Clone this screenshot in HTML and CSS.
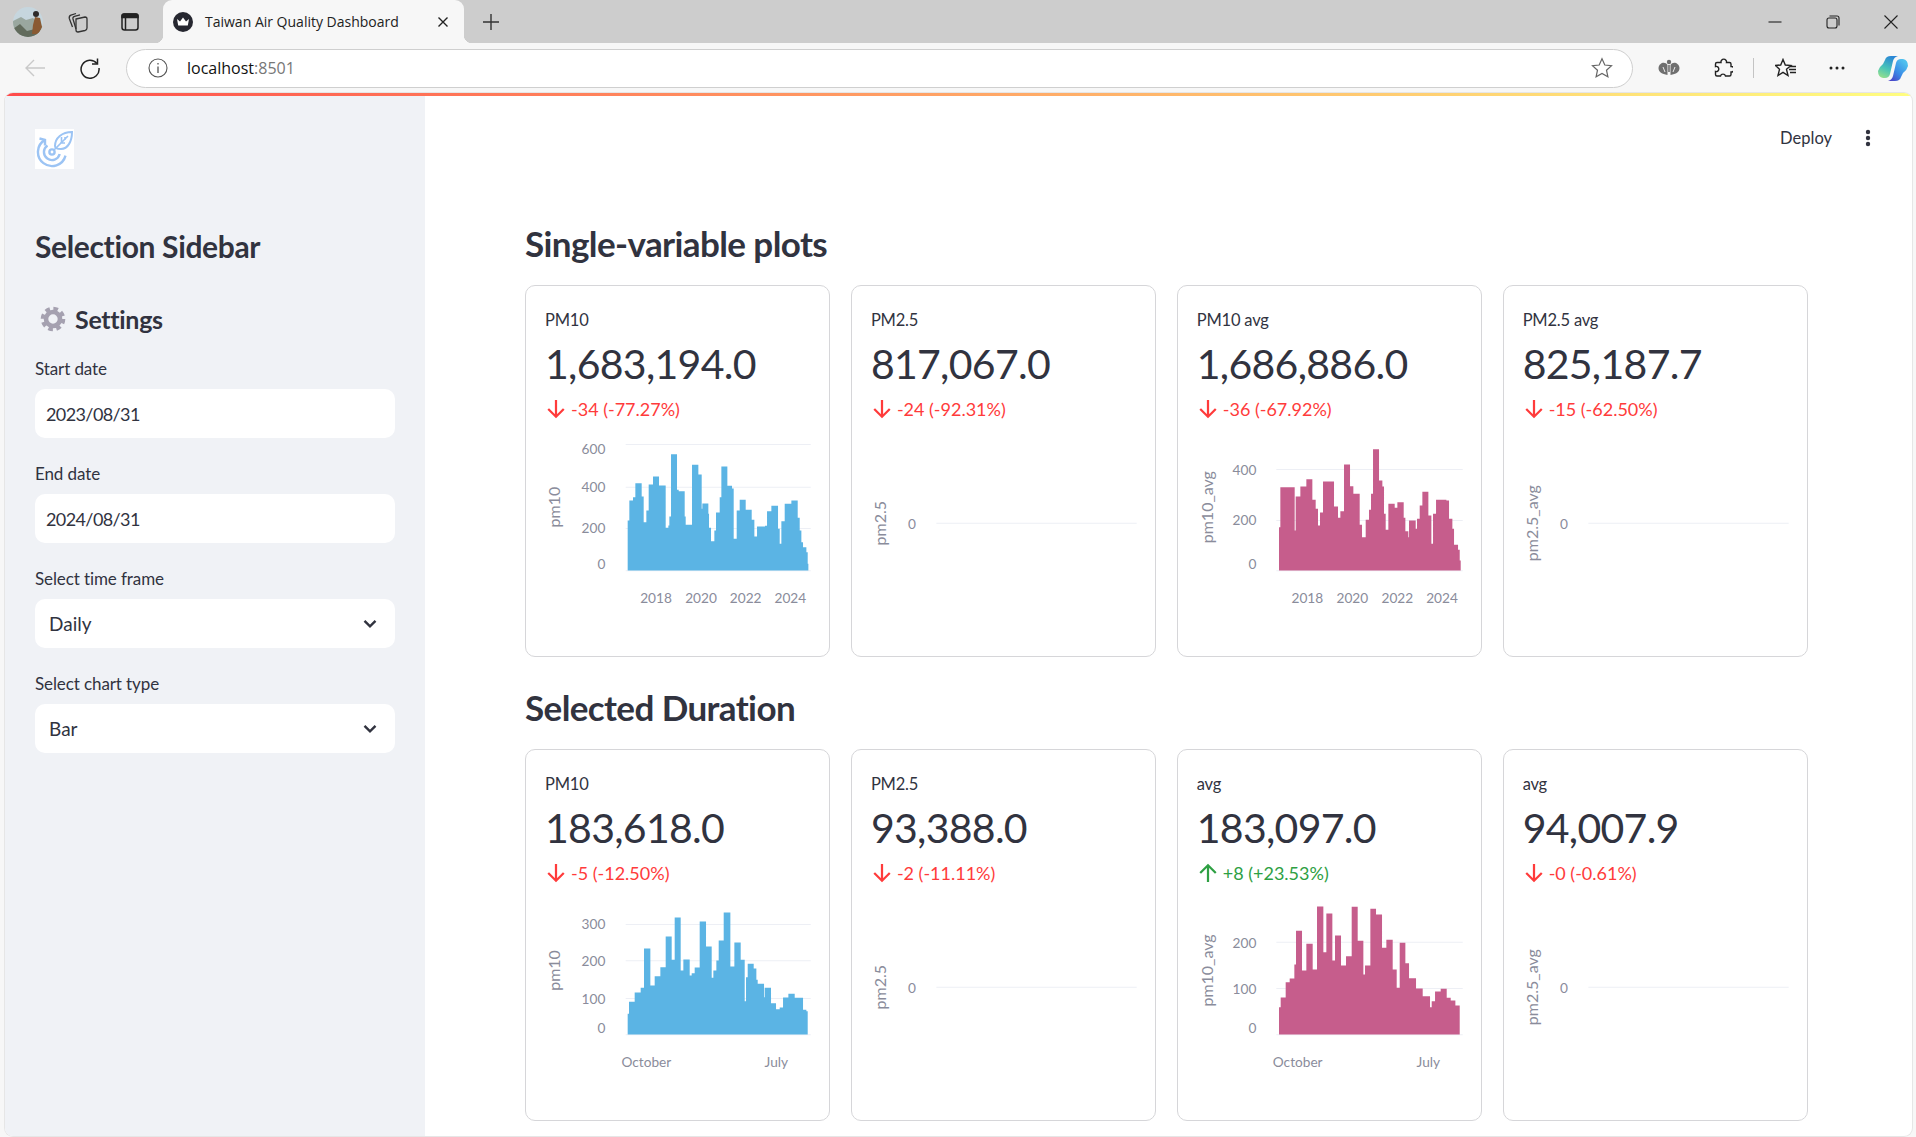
FILE: index.html
```html
<!DOCTYPE html>
<html>
<head>
  <meta charset="UTF-8">
  <title>Taiwan Air Quality Dashboard</title>
  <link rel="stylesheet" href="styles.css">
</head>
<body>
  <div class="tabbar">
    <div class="avatar">
      <svg width="30" height="30" viewBox="0 0 30 30">
        <defs><clipPath id="avatarClip"><circle cx="15" cy="15" r="15"/></clipPath></defs>
        <g clip-path="url(#avatarClip)">
          <rect width="30" height="30" fill="#c6d6de"/>
          <path d="M0 14 L8 10 L13 13 L20 11 L30 20 V30 H0Z" fill="#9aa79f"/>
          <path d="M0 22 L7 17 L14 24 L22 22 L30 26 V30 H0Z" fill="#626b5c"/>
          <path d="M22 10 L27 11 L29 20 L26 27 L19 27 L20 18Z" fill="#8a5a32"/>
          <circle cx="23" cy="7" r="3" fill="#2e2a29"/>
        </g>
      </svg>
    </div>
    <svg class="tab-icon" width="22" height="22" viewBox="0 0 22 22" fill="none" stroke="#333" stroke-width="1.3">
      <path d="M9 8 L18 6 Q20 6 20 8 V17 Q20 19 18 19.5 L11 21 Q9 21 9 19Z"/>
      <path d="M9 18 L6 8 Q5.5 6 7.5 5.3 L13 3.8"/>
      <path d="M5.5 16 L2.3 7.5 Q1.8 5 4 4.2 L9 2.5"/>
    </svg>
    <svg class="tab-icon" width="20" height="20" viewBox="0 0 20 20" fill="none" stroke="#222" stroke-width="1.5">
      <rect x="2" y="2" width="16" height="16" rx="2.5"/>
      <path d="M2 5.5 H18 V4 Q18 2 16 2 H4 Q2 2 2 4Z" fill="#222"/>
      <path d="M5.5 5.5 V18"/>
    </svg>
    <div class="tab">
      <svg class="favicon" width="20" height="20" viewBox="0 0 20 20">
        <circle cx="10" cy="10" r="10" fill="#262730"/>
        <path d="M4 7 L7 9.5 L10 5.5 L13 9.5 L16 7 L14.8 13.5 H5.2Z" fill="#fff"/>
      </svg>
      <span class="tab-title">Taiwan Air Quality Dashboard</span>
      <svg class="tab-close" width="12" height="12" viewBox="0 0 12 12" stroke="#222" stroke-width="1.4"><path d="M1.5 1.5 L10.5 10.5 M10.5 1.5 L1.5 10.5"/></svg>
    </div>
    <svg class="new-tab" width="18" height="18" viewBox="0 0 18 18" stroke="#333" stroke-width="1.4"><path d="M9 1 V17 M1 9 H17"/></svg>
    <div class="window-controls">
      <svg width="14" height="14" viewBox="0 0 14 14" stroke="#222" stroke-width="1.1"><path d="M0.5 7 H13.5"/></svg>
      <svg width="14" height="14" viewBox="0 0 14 14" fill="none" stroke="#222" stroke-width="1.1"><rect x="1" y="3" width="10" height="10" rx="2"/><path d="M3.5 1 H11 Q13 1 13 3 V10.5"/></svg>
      <svg width="14" height="14" viewBox="0 0 14 14" stroke="#222" stroke-width="1.1"><path d="M0.5 0.5 L13.5 13.5 M13.5 0.5 L0.5 13.5"/></svg>
    </div>
  </div>

  <div class="toolbar">
    <svg class="nav-back" width="22" height="22" viewBox="0 0 22 22" fill="none" stroke="#c9c9c9" stroke-width="1.4"><path d="M21 11 H2 M10 3 L2 11 L10 19"/></svg>
    <svg class="nav-reload" width="22" height="22" viewBox="0 0 22 22" fill="none" stroke="#222" stroke-width="1.5"><path d="M18 6.5 A9 9 0 1 0 20 11"/><path d="M18.5 1.5 V7 H13"/></svg>
    <div class="address">
      <svg width="20" height="20" viewBox="0 0 20 20" fill="none" stroke="#555" stroke-width="1.1"><circle cx="10" cy="10" r="9"/><path d="M10 8.5 V15 M10 5 V6.5" stroke-width="1.3"/></svg>
      <span class="url">localhost<span class="url-port">:8501</span></span>
      <svg class="address-star" width="22" height="22" viewBox="0 0 22 22" fill="none" stroke="#666" stroke-width="1.2"><path d="M11 1.8 L13.8 8 L20.5 8.7 L15.5 13.2 L16.9 19.8 L11 16.4 L5.1 19.8 L6.5 13.2 L1.5 8.7 L8.2 8Z"/></svg>
    </div>
    <div class="toolbar-icons">
      <svg width="22" height="18" viewBox="0 0 22 18" fill="#6f6f6f">
        <path d="M9.5 6 C7 2 1 4 0.5 9 C0.5 13 4 15 9.5 16Z"/>
        <path d="M12.5 6 C15 2 21 4 21.5 9 C21.5 13 18 15 12.5 16Z"/>
        <circle cx="11" cy="3" r="2.2"/>
        <path d="M11 6 V13" stroke="#6f6f6f" stroke-width="1.6"/>
        <path d="M5 8 L7 13 M17 8 L15 13" stroke="#f7f7f7" stroke-width="0.9"/>
      </svg>
      <svg width="20" height="20" viewBox="0 0 20 20" fill="none" stroke="#222" stroke-width="1.4"><path d="M8 4.5 A2.8 2.8 0 1 1 13.5 4.5 H16.5 Q18 4.5 18 6 V8.5 A2.8 2.8 0 1 1 18 14 V16.5 Q18 18 16.5 18 H12.5 A2.6 2.6 0 0 0 7.5 18 H4 Q2.5 18 2.5 16.5 V13.5 A2.6 2.6 0 1 0 2.5 8.5 V6 Q2.5 4.5 4 4.5Z"/></svg>
      <span class="toolbar-divider"></span>
      <svg width="22" height="20" viewBox="0 0 22 20" fill="none" stroke="#222" stroke-width="1.4"><path d="M8 1.5 L10.3 7 L16 7.5 L11.5 11.3 L13 17.5 L8 14.3 L3 17.5 L4.5 11.3 L0.5 7.5 L5.7 7Z"/><path d="M15 8.5 H21 M14 11.5 H21 M15 14.5 H21"/></svg>
      <svg width="16" height="4" viewBox="0 0 16 4" fill="#222"><circle cx="2" cy="2" r="1.5"/><circle cx="8" cy="2" r="1.5"/><circle cx="14" cy="2" r="1.5"/></svg>
      <svg width="30" height="27" viewBox="0 0 30 27">
        <defs>
          <linearGradient id="copilotA" x1="0.6" y1="0" x2="0.2" y2="1"><stop offset="0" stop-color="#2a86d6"/><stop offset="0.55" stop-color="#49c4b8"/><stop offset="1" stop-color="#96e08c"/></linearGradient>
          <linearGradient id="copilotB" x1="0.9" y1="0.2" x2="0.2" y2="1"><stop offset="0" stop-color="#4fc0ee"/><stop offset="0.55" stop-color="#3a8ae6"/><stop offset="1" stop-color="#4a45c8"/></linearGradient>
        </defs>
        <path d="M13 1 H20 Q16 2 15 6 L12 19 Q11 23 7 23 H5 Q0 22 0 16 Q1 12 5 9 L7 5 Q8 1 13 1Z" fill="url(#copilotA)"/>
        <path d="M17 26 H10 Q14 25 15 21 L18 8 Q19 4 23 4 H25 Q30 5 30 11 Q29 15 25 18 L23 22 Q22 26 17 26Z" fill="url(#copilotB)"/>
      </svg>
    </div>
  </div>

  <div class="app">
    <div class="decoration"></div>
    <div class="app-body">
      <aside class="sidebar">
        <div class="logo">
          <svg width="39" height="40" viewBox="0 0 39 40" fill="none" stroke="#9cc4f4" stroke-width="2.4">
            <path d="M10 10.9 A14 14 0 1 0 30.5 26.6"/>
            <path d="M4.5 9.5 L10 10.9 L10 16.5"/>
            <path d="M12.5 16.4 A8 8 0 1 0 24.7 25"/>
            <circle cx="17" cy="23" r="2.6"/>
            <path d="M20 17 C20 9 27 3 37 3 C37 12 33 20 26 20 C23 20 20 20 20 17Z" stroke-width="2"/>
            <path d="M19 21 L33 7 M26.5 8 V14 M30 8 V11 M25 14 H30" stroke-width="1.6"/>
          </svg>
        </div>
        <h2 class="sidebar-title">Selection Sidebar</h2>
        <h3 class="settings-title">
          <svg width="26" height="26" viewBox="0 0 26 26" fill="none" stroke="#a5a1b0">
            <circle cx="13" cy="13" r="10.3" stroke-width="4" stroke-dasharray="4.6 3.5"/>
            <circle cx="13" cy="13" r="7" stroke-width="4.6"/>
          </svg>
          Settings
        </h3>
        <div class="field">
          <div class="field-label">Start date</div>
          <div class="field-box">2023/08/31</div>
        </div>
        <div class="field">
          <div class="field-label">End date</div>
          <div class="field-box">2024/08/31</div>
        </div>
        <div class="field">
          <div class="field-label">Select time frame</div>
          <div class="field-box select">Daily
            <svg width="14" height="10" viewBox="0 0 14 10" fill="none" stroke="#31333f" stroke-width="2.4"><path d="M1.5 1.8 L7 7.3 L12.5 1.8"/></svg>
          </div>
        </div>
        <div class="field">
          <div class="field-label">Select chart type</div>
          <div class="field-box select">Bar
            <svg width="14" height="10" viewBox="0 0 14 10" fill="none" stroke="#31333f" stroke-width="2.4"><path d="M1.5 1.8 L7 7.3 L12.5 1.8"/></svg>
          </div>
        </div>
      </aside>

      <main class="main">
        <div class="topbar">
          <span class="deploy">Deploy</span>
          <svg class="kebab" width="6" height="18" viewBox="0 0 6 18" fill="#31333f"><circle cx="3" cy="3" r="2.2"/><circle cx="3" cy="9" r="2.2"/><circle cx="3" cy="15" r="2.2"/></svg>
        </div>

        <h2 class="section-title">Single-variable plots</h2>
        <div class="cards">
          <div class="card">
            <div class="metric-label">PM10</div>
            <div class="metric-value">1,683,194.0</div>
            <div class="metric-delta down">
              <svg class="arrow" width="20" height="20" viewBox="0 0 18 18"><path d="M9 1 V16 M2 9 L9 16 L16 9"/></svg>-34 (-77.27%)
            </div>
            <svg class="chart" viewBox="19 470 910 530">
              <path class="grid" d="M318 492 H873 M318 620 H873 M318 744 H873 M318 871 H873"/>
              <path class="bars-blue" d="M324 870 V720 H329 V660 H340 V650 H347 V608 H366 V648 H372 V725 H380 V690 H387 V612 H400 V588 H418 V615 H438 V742 H446 V735 H449 V708 H454 V521 H472 V628 H477 V632 H495 V708 H498 V733 H517 V553 H536 V582 H546 V685 H548 V669 H566 V700 H568 V742 H574 V782 H584 V750 H589 V696 H600 V650 H605 V558 H623 V616 H637 V624 H642 V775 H651 V690 H660 V658 H678 V688 H696 V718 H704 V768 H712 V738 H736 V736 H742 V692 H755 V676 H775 V745 H780 V790 H785 V722 H795 V670 H815 V660 H834 V712 H840 V750 H845 V785 H850 V800 H860 V815 H864 V850 H866 V870Z"/>
              <text class="tick" x="257" y="522" text-anchor="end">600</text>
              <text class="tick" x="257" y="634" text-anchor="end">400</text>
              <text class="tick" x="257" y="758" text-anchor="end">200</text>
              <text class="tick" x="257" y="865" text-anchor="end">0</text>
              <text class="axis-title" transform="translate(122 680) rotate(-90)" text-anchor="middle">pm10</text>
              <text class="tick" x="409" y="967" text-anchor="middle">2018</text>
              <text class="tick" x="544" y="967" text-anchor="middle">2020</text>
              <text class="tick" x="678" y="967" text-anchor="middle">2022</text>
              <text class="tick" x="812" y="967" text-anchor="middle">2024</text>
            </svg>
          </div>
          <div class="card">
            <div class="metric-label">PM2.5</div>
            <div class="metric-value">817,067.0</div>
            <div class="metric-delta down">
              <svg class="arrow" width="20" height="20" viewBox="0 0 18 18"><path d="M9 1 V16 M2 9 L9 16 L16 9"/></svg>-24 (-92.31%)
            </div>
            <svg class="chart" viewBox="7 470 910 530">
              <path class="grid" d="M260 728 H861"/>
              <text class="tick" x="199" y="745" text-anchor="end">0</text>
              <text class="axis-title" transform="translate(110 728) rotate(-90)" text-anchor="middle">pm2.5</text>
            </svg>
          </div>
          <div class="card">
            <div class="metric-label">PM10 avg</div>
            <div class="metric-value">1,686,886.0</div>
            <div class="metric-delta down">
              <svg class="arrow" width="20" height="20" viewBox="0 0 18 18"><path d="M9 1 V16 M2 9 L9 16 L16 9"/></svg>-36 (-67.92%)
            </div>
            <svg class="chart" viewBox="25 470 910 530">
              <path class="grid" d="M320 567 H879 M320 720 H879 M320 871 H879"/>
              <path class="bars-maroon" d="M328 870 V740 H332 V620 H375 V750 H378 V648 H392 V618 H410 V596 H428 V658 H438 V685 H445 V735 H451 V696 H460 V603 H493 V678 H505 V712 H512 V692 H523 V552 H541 V617 H551 V640 H570 V733 H577 V770 H588 V718 H598 V688 H604 V640 H610 V506 H628 V600 H638 V618 H643 V700 H648 V748 H656 V670 H675 V682 H683 V665 H702 V712 H707 V752 H716 V770 H718 V720 H738 V745 H742 V715 H750 V675 H758 V634 H776 V705 H785 V790 H790 V700 H799 V658 H830 V660 H838 V715 H848 V745 H853 V793 H865 V808 H870 V840 H873 V870Z"/>
              <text class="tick" x="260" y="583" text-anchor="end">400</text>
              <text class="tick" x="260" y="735" text-anchor="end">200</text>
              <text class="tick" x="260" y="865" text-anchor="end">0</text>
              <text class="axis-title" transform="translate(130 680) rotate(-90)" text-anchor="middle">pm10_avg</text>
              <text class="tick" x="413" y="967" text-anchor="middle">2018</text>
              <text class="tick" x="548" y="967" text-anchor="middle">2020</text>
              <text class="tick" x="683" y="967" text-anchor="middle">2022</text>
              <text class="tick" x="817" y="967" text-anchor="middle">2024</text>
            </svg>
          </div>
          <div class="card">
            <div class="metric-label">PM2.5 avg</div>
            <div class="metric-value">825,187.7</div>
            <div class="metric-delta down">
              <svg class="arrow" width="20" height="20" viewBox="0 0 18 18"><path d="M9 1 V16 M2 9 L9 16 L16 9"/></svg>-15 (-62.50%)
            </div>
            <svg class="chart" viewBox="7 470 910 530">
              <path class="grid" d="M260 728 H861"/>
              <text class="tick" x="199" y="745" text-anchor="end">0</text>
              <text class="axis-title" transform="translate(110 728) rotate(-90)" text-anchor="middle">pm2.5_avg</text>
            </svg>
          </div>
        </div>

        <h2 class="section-title second">Selected Duration</h2>
        <div class="cards">
          <div class="card">
            <div class="metric-label">PM10</div>
            <div class="metric-value">183,618.0</div>
            <div class="metric-delta down">
              <svg class="arrow" width="20" height="20" viewBox="0 0 18 18"><path d="M9 1 V16 M2 9 L9 16 L16 9"/></svg>-5 (-12.50%)
            </div>
            <svg class="chart" viewBox="19 452 910 530">
              <path class="grid" d="M318 522 H873 M318 631 H873 M318 744 H873 M318 853 H873"/>
              <path class="bars-blue" d="M324 852 V790 H328 V754 H345 V726 H363 V712 H373 V594 H392 V705 H405 V677 H422 V650 H438 V558 H456 V628 H465 V501 H483 V660 H491 V627 H510 V675 H516 V668 H525 V651 H540 V513 H559 V588 H576 V682 H581 V660 H590 V630 H597 V570 H612 V486 H632 V648 H644 V576 H663 V628 H675 V752 H679 V680 H684 V640 H702 V654 H710 V688 H714 V700 H733 V740 H735 V712 H754 V758 H769 V776 H780 V771 H790 V741 H806 V730 H825 V742 H850 V778 H860 V782 H864 V852Z"/>
              <text class="tick" x="257" y="537" text-anchor="end">300</text>
              <text class="tick" x="257" y="648" text-anchor="end">200</text>
              <text class="tick" x="257" y="760" text-anchor="end">100</text>
              <text class="tick" x="257" y="847" text-anchor="end">0</text>
              <text class="axis-title" transform="translate(122 660) rotate(-90)" text-anchor="middle">pm10</text>
              <text class="tick" x="380" y="949" text-anchor="middle">October</text>
              <text class="tick" x="770" y="949" text-anchor="middle">July</text>
            </svg>
          </div>
          <div class="card">
            <div class="metric-label">PM2.5</div>
            <div class="metric-value">93,388.0</div>
            <div class="metric-delta down">
              <svg class="arrow" width="20" height="20" viewBox="0 0 18 18"><path d="M9 1 V16 M2 9 L9 16 L16 9"/></svg>-2 (-11.11%)
            </div>
            <svg class="chart" viewBox="7 470 910 530">
              <path class="grid" d="M260 728 H861"/>
              <text class="tick" x="199" y="745" text-anchor="end">0</text>
              <text class="axis-title" transform="translate(110 728) rotate(-90)" text-anchor="middle">pm2.5</text>
            </svg>
          </div>
          <div class="card">
            <div class="metric-label">avg</div>
            <div class="metric-value">183,097.0</div>
            <div class="metric-delta up">
              <svg class="arrow" width="20" height="20" viewBox="0 0 18 18"><path d="M9 17 V2 M2 9 L9 2 L16 9"/></svg>+8 (+23.53%)
            </div>
            <svg class="chart" viewBox="25 452 910 530">
              <path class="grid" d="M320 575 H879 M320 714 H879 M320 853 H879"/>
              <path class="bars-maroon" d="M328 852 V770 H333 V741 H348 V695 H360 V684 H374 V642 H379 V541 H397 V660 H410 V580 H429 V657 H442 V468 H461 V605 H470 V489 H488 V630 H496 V555 H514 V645 H529 V617 H546 V469 H564 V571 H581 V672 H586 V645 H602 V475 H619 V492 H637 V592 H650 V568 H669 V657 H681 V712 H690 V577 H707 V638 H718 V683 H739 V714 H759 V737 H781 V770 H786 V752 H796 V723 H813 V715 H831 V742 H843 V750 H857 V765 H870 V852Z"/>
              <text class="tick" x="260" y="592" text-anchor="end">200</text>
              <text class="tick" x="260" y="730" text-anchor="end">100</text>
              <text class="tick" x="260" y="847" text-anchor="end">0</text>
              <text class="axis-title" transform="translate(130 660) rotate(-90)" text-anchor="middle">pm10_avg</text>
              <text class="tick" x="384" y="949" text-anchor="middle">October</text>
              <text class="tick" x="776" y="949" text-anchor="middle">July</text>
            </svg>
          </div>
          <div class="card">
            <div class="metric-label">avg</div>
            <div class="metric-value">94,007.9</div>
            <div class="metric-delta down">
              <svg class="arrow" width="20" height="20" viewBox="0 0 18 18"><path d="M9 1 V16 M2 9 L9 16 L16 9"/></svg>-0 (-0.61%)
            </div>
            <svg class="chart" viewBox="7 470 910 530">
              <path class="grid" d="M260 728 H861"/>
              <text class="tick" x="199" y="745" text-anchor="end">0</text>
              <text class="axis-title" transform="translate(110 728) rotate(-90)" text-anchor="middle">pm2.5_avg</text>
            </svg>
          </div>
        </div>
      </main>
    </div>
  </div>
</body>
</html>
```

FILE: styles.css
```css
* {
  box-sizing: border-box;
}
html, body {
  height: 100%;
}
body {
  margin: 0;
  display: flex;
  flex-direction: column;
  overflow: hidden;
  background: #f7f7f7;
  color: #31333f;
  font-family: Lato, "Noto Sans", sans-serif;
}

/* browser chrome */
.tabbar {
  height: 43px;
  flex: none;
  display: flex;
  align-items: center;
  background: #cdcdcd;
  padding-left: 13px;
}
.avatar {
  width: 30px;
  height: 30px;
  margin-right: 24px;
}
.avatar svg {
  display: block;
}
.tab-icon {
  margin-right: 31px;
}
.tab-icon + .tab-icon {
  margin-right: 23px;
}
.tab {
  position: relative;
  width: 301px;
  height: 43px;
  display: flex;
  align-items: center;
  padding: 0 15px 0 10px;
  background: #f7f7f7;
  border-radius: 9px 9px 0 0;
  font-family: "Open Sans", sans-serif;
  font-size: 14px;
  color: #222;
}
.tab::before,
.tab::after {
  content: "";
  position: absolute;
  bottom: 0;
  width: 8px;
  height: 8px;
}
.tab::before {
  left: -8px;
  background: radial-gradient(circle at 0 0, transparent 8px, #f7f7f7 8.5px);
}
.tab::after {
  right: -8px;
  background: radial-gradient(circle at 100% 0, transparent 8px, #f7f7f7 8.5px);
}
.tab-title {
  flex: 1;
  margin-left: 12px;
  white-space: nowrap;
}
.new-tab {
  margin-left: 18px;
}
.window-controls {
  margin-left: auto;
  display: flex;
  gap: 44px;
  padding-right: 18px;
}

.toolbar {
  height: 50px;
  flex: none;
  display: flex;
  align-items: center;
  padding: 0 8px 0 24px;
}
.nav-back {
  margin-right: 33px;
}
.nav-reload {
  margin-right: 25px;
}
.address {
  width: 1507px;
  height: 39px;
  display: flex;
  align-items: center;
  padding: 0 19px 0 21px;
  background: #fff;
  border: 1px solid #cfcfcf;
  border-radius: 20px;
}
.url {
  margin-left: 19px;
  font-family: "Open Sans", sans-serif;
  font-size: 16px;
  color: #111;
}
.url-port {
  color: #777;
}
.address-star {
  margin-left: auto;
}
.toolbar-icons {
  flex: 1;
  display: flex;
  align-items: center;
  justify-content: space-between;
  padding-left: 25px;
}
.toolbar-divider {
  width: 1px;
  height: 20px;
  background: #c4c4c4;
  margin: 0 -12px;
}

/* app */
.app {
  flex: 1;
  min-height: 0;
  display: flex;
  flex-direction: column;
  margin: 0 4px 1px 5px;
  background: #fff;
  border-radius: 8px;
  box-shadow: 0 0 0 1px #e6e6e6;
  overflow: hidden;
}
.decoration {
  height: 3px;
  flex: none;
  background: linear-gradient(90deg, #ff4b4b, #fffd80);
}
.app-body {
  flex: 1;
  min-height: 0;
  display: flex;
}
.sidebar {
  width: 420px;
  flex: none;
  padding: 33px 30px 0 30px;
  background: #f0f2f6;
}
.logo {
  width: 39px;
  height: 40px;
  background: #fff;
}
.logo svg {
  display: block;
}
.sidebar-title {
  margin: 57px 0 0;
  font-size: 30px;
  line-height: 40px;
  font-weight: 700;
  letter-spacing: -0.35px;
}
.settings-title {
  display: flex;
  align-items: center;
  gap: 9px;
  margin: 36px 0 0 5px;
  font-size: 25px;
  line-height: 34px;
  font-weight: 700;
  letter-spacing: -0.3px;
}
.field {
  margin-bottom: 24px;
}
.settings-title + .field {
  margin-top: 21px;
}
.field-label {
  font-size: 17px;
  line-height: 24px;
  margin-bottom: 8px;
  letter-spacing: -0.1px;
}
.field-box {
  height: 49px;
  display: flex;
  align-items: center;
  justify-content: space-between;
  padding: 0 18px 0 11px;
  background: #fff;
  border-radius: 10px;
  font-size: 18px;
  letter-spacing: -0.6px;
}
.select {
  padding-left: 14px;
  font-size: 19px;
  letter-spacing: 0;
}

/* main area */
.main {
  flex: 1;
  min-width: 0;
  padding: 0 104px 0 100px;
}
.topbar {
  height: 122px;
  margin-right: -104px;
  padding: 30px 41px 0 0;
  display: flex;
  justify-content: flex-end;
  gap: 33px;
}
.deploy {
  font-size: 16.5px;
  line-height: 24px;
}
.kebab {
  margin-top: 3px;
}
.section-title {
  margin: 0 0 17px;
  font-size: 35px;
  line-height: 50px;
  font-weight: 700;
  letter-spacing: -0.6px;
}
.section-title.second {
  margin-top: 25px;
}
.cards {
  display: grid;
  grid-template-columns: repeat(4, 1fr);
  gap: 20.5px;
}
.card {
  height: 372px;
  padding-top: 22px;
  background: #fff;
  border: 1px solid #d6d6d9;
  border-radius: 10px;
}
.metric-label {
  padding: 0 19px;
  font-size: 16.5px;
  line-height: 24px;
  letter-spacing: -0.2px;
}
.metric-value {
  padding: 0 19px;
  margin-top: 4px;
  font-size: 41px;
  line-height: 56px;
  letter-spacing: -0.7px;
}
.metric-delta {
  display: flex;
  align-items: center;
  gap: 5px;
  margin-top: 5px;
  padding: 0 20px;
  font-size: 18px;
  line-height: 24px;
}
.arrow {
  fill: none;
  stroke: currentColor;
  stroke-width: 2;
}
.down {
  color: #ff3b3b;
}
.up {
  color: #2ea043;
}
.chart {
  display: block;
  width: 100%;
  height: 177px;
  margin-top: 16px;
}
.grid {
  fill: none;
  stroke: #edeff5;
  stroke-width: 3;
}
.bars-blue {
  fill: #5bb4e4;
}
.bars-maroon {
  fill: #c65d8c;
}
.tick {
  font-size: 41px;
  fill: #8a8c9b;
}
.axis-title {
  font-size: 48px;
  fill: #8a8c9b;
}
```
